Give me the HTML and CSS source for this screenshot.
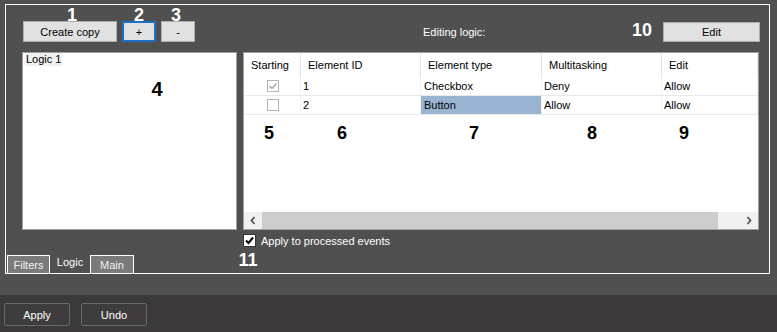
FILE: index.html
```html
<!DOCTYPE html>
<html lang="en">
<head>
  <meta charset="UTF-8">
  <title>Logic settings</title>
  <link rel="stylesheet" href="styles.css">
</head>
<body>
  <div class="window">
    <div class="frame">

      <!-- Toolbar -->
      <div class="toolbar">
        <button class="btn btn-copy">Create copy</button>
        <button class="btn btn-plus">+</button>
        <button class="btn btn-minus">-</button>
        <span class="edit-label">Editing logic:</span>
        <button class="btn btn-edit">Edit</button>
      </div>

      <!-- Logic list and element grid -->
      <div class="main">
        <div class="logic-list">
          <span class="list-item">Logic 1</span>
        </div>
        <div class="grid-box">
          <div class="grid">
            <div class="grid-row grid-head">
              <div class="cell">Starting</div>
              <div class="cell">Element ID</div>
              <div class="cell">Element type</div>
              <div class="cell">Multitasking</div>
              <div class="cell">Edit</div>
            </div>
            <div class="grid-row">
              <div class="cell cell-check">
                <svg width="12" height="12" viewBox="0 0 12 12"><rect x="0.5" y="0.5" width="11" height="11" fill="#fff" stroke="#b4b4b4"/><path d="M2.5 6 L5 8.5 L9.5 3.5" fill="none" stroke="#9a9a9a" stroke-width="1.2"/></svg>
              </div>
              <div class="cell">1</div>
              <div class="cell cell-type">Checkbox</div>
              <div class="cell">Deny</div>
              <div class="cell">Allow</div>
            </div>
            <div class="grid-row">
              <div class="cell cell-check">
                <svg width="12" height="12" viewBox="0 0 12 12"><rect x="0.5" y="0.5" width="11" height="11" fill="#fff" stroke="#b4b4b4"/></svg>
              </div>
              <div class="cell">2</div>
              <div class="cell cell-type selected">Button</div>
              <div class="cell">Allow</div>
              <div class="cell">Allow</div>
            </div>
          </div>
          <div class="hscroll">
            <div class="scroll-btn">
              <svg width="6" height="9" viewBox="0 0 6 9"><path d="M4.5 1 L1.5 4.5 L4.5 8" fill="none" stroke="#555" stroke-width="1.8"/></svg>
            </div>
            <div class="scroll-thumb"></div>
            <div class="scroll-track"></div>
            <div class="scroll-btn">
              <svg width="6" height="9" viewBox="0 0 6 9"><path d="M1.5 1 L4.5 4.5 L1.5 8" fill="none" stroke="#555" stroke-width="1.8"/></svg>
            </div>
          </div>
        </div>
      </div>

      <!-- Option -->
      <label class="option">
        <svg width="13" height="13" viewBox="0 0 13 13"><rect x="0.5" y="0.5" width="12" height="12" fill="#fff" stroke="#333"/><path d="M3 6.5 L5.5 9 L10 3.5" fill="none" stroke="#000" stroke-width="2"/></svg>
        <span>Apply to processed events</span>
      </label>

      <!-- Tabs -->
      <div class="tabs">
        <div class="tab">Filters</div>
        <div class="tab tab-active">Logic</div>
        <div class="tab tab-main">Main</div>
      </div>

      <!-- Callout numbers -->
      <span class="mark m1">1</span>
      <span class="mark m2">2</span>
      <span class="mark m3">3</span>
      <span class="mark m10">10</span>
      <span class="mark mark-dark m4">4</span>
      <span class="mark mark-dark m5">5</span>
      <span class="mark mark-dark m6">6</span>
      <span class="mark mark-dark m7">7</span>
      <span class="mark mark-dark m8">8</span>
      <span class="mark mark-dark m9">9</span>
      <span class="mark m11">11</span>
    </div>
  </div>

  <!-- Footer buttons -->
  <div class="footer">
    <button class="footer-btn">Apply</button>
    <button class="footer-btn">Undo</button>
  </div>
</body>
</html>
```

FILE: styles.css
```css
/* Global styling */
body { margin: 0; width: 777px; height: 332px; overflow: hidden; background-color: #505050; font-family: "Liberation Sans", Arial, sans-serif; font-size: 11px; }
.window { height: 295px; padding: 4px 0 0 5px; box-sizing: border-box; }
.frame { position: relative; width: 765px; height: 270px; box-sizing: border-box; border: 1px solid #fff; display: flex; flex-direction: column; }

/* Toolbar */
.toolbar { display: flex; align-items: center; height: 21px; margin: 16px 0 0 17px; padding-right: 9px; }
.btn { font: inherit; color: #000; background-color: #e1e1e1; border: 1px solid #adadad; height: 21px; padding: 0; box-sizing: border-box; }
.btn-copy { width: 94px; }
.btn-plus { width: 34px; margin-left: 5px; border: 2px solid #1c6ec6; }
.btn-minus { width: 34px; margin-left: 5px; }
.edit-label { margin-left: 228px; color: #fff; }
.btn-edit { width: 97px; height: 20px; margin-left: auto; }

/* Main area */
.main { display: flex; gap: 6px; height: 178px; margin: 10px 0 0 16px; }
.logic-list { width: 215px; box-sizing: border-box; border: 1px solid #a0a0a0; background-color: #fff; padding: 0 0 0 2px; }
.list-item { display: inline-block; background-color: #f0f0f0; padding: 0 1px; line-height: 13px; }

.grid-box { width: 516px; box-sizing: border-box; border: 1px solid #a0a0a0; background-color: #fff; display: flex; flex-direction: column; }
.grid { flex: 1; }
.grid-row { display: grid; grid-template-columns: 57px 120px 121px 120px 1fr; height: 19px; box-sizing: border-box; border-bottom: 1px solid #e8e8e8; }
.grid-row .cell { box-sizing: border-box; padding-left: 2px; line-height: 18px; border-right: 1px solid #f2f2f2; white-space: nowrap; overflow: hidden; }
.grid-head { height: 24px; border-bottom: none; }
.grid-head .cell { line-height: 24px; padding-left: 7px; border-right: 1px solid #e5e5e5; }
.grid-row .cell-type { padding-left: 3px; }
.cell-check { display: flex; align-items: center; justify-content: center; }
.grid-row .selected { background-color: #99b4d1; }

/* Horizontal scrollbar */
.hscroll { display: flex; height: 17px; background-color: #f0f0f0; }
.scroll-btn { width: 18px; display: flex; align-items: center; justify-content: center; }
.scroll-thumb { width: 456px; background-color: #cdcdcd; }
.scroll-track { flex: 1; }

/* Option */
.option { display: flex; align-items: center; gap: 5px; height: 13px; margin: 4px 0 0 237px; color: #fff; }

/* Tabs */
.tabs { display: flex; height: 18px; margin: auto 0 0 1px; }
.tab { box-sizing: border-box; width: 43px; padding-top: 3px; text-align: center; color: #f2f2f2; background-color: #7a7a7a; border: 1px solid #fff; border-bottom: none; }
.tab-active { width: 40px; padding-top: 1px; color: #fff; background-color: transparent; border: none; }
.tab-main { width: 44px; }

/* Callout numbers */
.mark { position: absolute; width: 24px; text-align: center; font: bold 18px/18px "Liberation Sans", Arial, sans-serif; color: #fff; }
.mark-dark { color: #000; }
.m1 { left: 54px; top: 1px; }
.m2 { left: 121px; top: 1px; }
.m3 { left: 158px; top: 1px; }
.m10 { left: 624px; top: 16px; }
.m4 { left: 139px; top: 75px; font-size: 20px; }
.m5 { left: 251px; top: 119px; }
.m6 { left: 324px; top: 119px; }
.m7 { left: 456px; top: 119px; }
.m8 { left: 574px; top: 119px; }
.m9 { left: 666px; top: 119px; }
.m11 { left: 230px; top: 246px; }

/* Footer */
.footer { display: flex; gap: 11px; height: 37px; padding: 8px 0 0 4px; box-sizing: border-box; background-color: #3b3939; }
.footer-btn { width: 66px; height: 23px; font: inherit; color: #fff; background-color: #3e3c3d; border: 1px solid #6a6a6a; border-radius: 2px; padding: 0; }
```
